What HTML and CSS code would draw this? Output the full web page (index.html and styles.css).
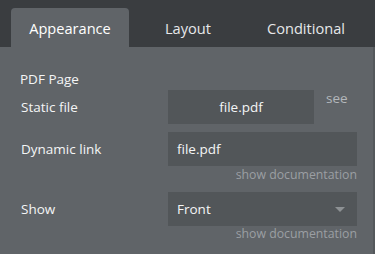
FILE: index.html
```html
<!DOCTYPE html>
<html lang="en">
<head>
    <meta charset="UTF-8">
    <meta name="viewport" content="width=device-width, initial-scale=1.0">
    <title>PDF Page</title>
    <link rel="stylesheet" href="styles.css">
</head>
<body>
    <div class="editor">
        <div class="tabs">
            <div class="tab active">Appearance</div>
            <div class="tab">Layout</div>
            <div class="tab">Conditional</div>
        </div>
        <div class="panel">
            <p class="title">PDF Page</p>
            <div class="row">
                <span class="label">Static file</span>
                <div class="field short center">file.pdf</div>
                <span class="see">see</span>
            </div>
            <div class="row gap">
                <span class="label">Dynamic link</span>
                <div class="field">file.pdf</div>
            </div>
            <div class="doc">show documentation</div>
            <div class="row gap-lg">
                <span class="label">Show</span>
                <div class="field select">
                    Front
                    <span class="caret"></span>
                </div>
            </div>
            <div class="doc flush">show documentation</div>
        </div>
    </div>
</body>
</html>
```

FILE: styles.css
```css
body {
    margin: 0;
    background: #3a3d40;
    font-family: "Open Sans", "DejaVu Sans", sans-serif;
    color: #f4f5f6;
}
.editor {
    width: 375px;
    height: 254px;
    display: flex;
    flex-direction: column;
}
.tabs {
    display: flex;
    padding: 8px 0 0 11px;
    height: 39px;
}
.tab {
    width: 118px;
    display: flex;
    align-items: center;
    justify-content: center;
    font-size: 14.6px;
    color: #e6e8ea;
    border-radius: 4px 4px 0 0;
}
.tab.active {
    background: #606468;
    color: #ffffff;
}
.panel {
    flex: 1;
    background: #606468;
    border-right: 2px solid #54585b;
    padding: 23px 16px 0 20px;
}
.title {
    margin: 0;
    font-size: 13.5px;
    line-height: 18px;
}
.row {
    display: flex;
    align-items: center;
    margin-top: 2px;
    height: 34px;
}
.row.gap {
    margin-top: 8px;
}
.row.gap-lg {
    margin-top: 9px;
}
.label {
    width: 148px;
    font-size: 13.5px;
    padding-left: 1px;
    box-sizing: border-box;
}
.field {
    background: #525659;
    height: 34px;
    width: 189px;
    box-sizing: border-box;
    padding: 0 9px;
    display: flex;
    align-items: center;
    font-size: 13.5px;
}
.field.short {
    width: 146px;
}
.center {
    justify-content: center;
}
.see {
    margin-left: 12px;
    margin-top: -18px;
    font-size: 13.5px;
    color: #b3b7bb;
}
.select {
    justify-content: space-between;
    padding-right: 12px;
}
.caret {
    width: 0;
    height: 0;
    border-left: 5px solid transparent;
    border-right: 5px solid transparent;
    border-top: 5px solid #8d9194;
}
.doc {
    width: 337px;
    text-align: right;
    font-size: 12.3px;
    line-height: 16px;
    margin-top: 1px;
    color: #9b9fa3;
}
.doc.flush {
    margin-top: 0;
}
```
